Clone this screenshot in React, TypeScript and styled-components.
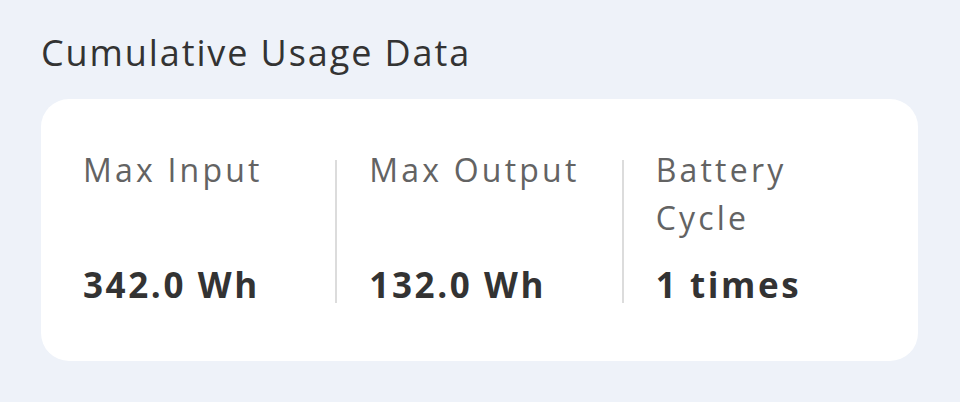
import React from "react";
import styled, { createGlobalStyle } from "styled-components";

const Global = createGlobalStyle`
  html, body { margin: 0; padding: 0; background: #eef2f9; }
  body { font-family: "Open Sans", "Noto Sans", sans-serif; }
`;

const Page = styled.div`
  width: 960px;
  height: 402px;
  box-sizing: border-box;
  padding: 28px 42px 0 41px;
  background: #eef2f9;
`;

const Title = styled.h2`
  margin: 0 0 21px;
  font-size: 36px;
  line-height: 50px;
  font-weight: 400;
  letter-spacing: 1.9px;
  color: #333;
`;

const Card = styled.div`
  background: #fff;
  border-radius: 28px;
  padding: 47px 42px 54px;
  display: grid;
  grid-template-columns: 1fr 2px 1fr 2px 1fr;
  column-gap: 32px;
`;

const Column = styled.div`
  min-width: 0;
  display: flex;
  flex-direction: column;
  justify-content: space-between;
`;

const Divider = styled.div`
  background: #dcdcdc;
  margin: 14px 0 4px;
`;

const Label = styled.div`
  font-size: 32px;
  line-height: 48px;
  letter-spacing: 3.2px;
  color: #636363;
  min-height: 96px;
`;

const Value = styled.div`
  margin-top: 21px;
  font-size: 35px;
  line-height: 44px;
  font-weight: 700;
  letter-spacing: 2.6px;
  color: #333;
`;

const items = [
  { label: "Max Input", value: "342.0 Wh" },
  { label: "Max Output", value: "132.0 Wh" },
  { label: "Battery Cycle", value: "1 times" },
];

export default function App() {
  return (
    <>
      <Global />
      <Page>
        <Title>Cumulative Usage Data</Title>
        <Card>
          {items.map((it, i) => (
            <React.Fragment key={it.label}>
              {i > 0 && <Divider />}
              <Column>
                <Label>{it.label}</Label>
                <Value>{it.value}</Value>
              </Column>
            </React.Fragment>
          ))}
        </Card>
      </Page>
    </>
  );
}
